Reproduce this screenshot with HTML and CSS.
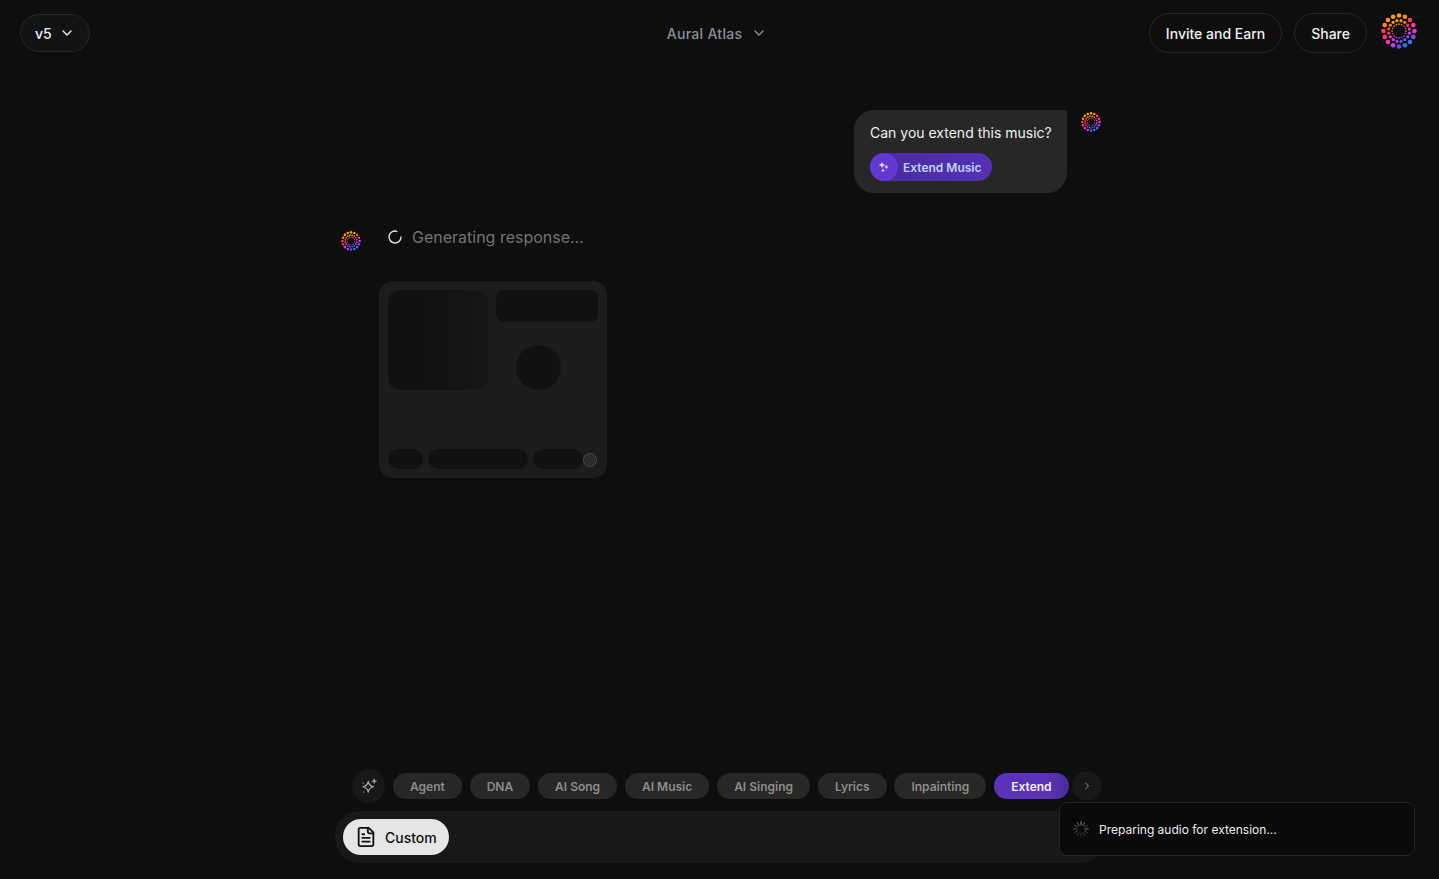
FILE: index.html
```html
<!DOCTYPE html>
<html lang="en">
<head>
    <meta charset="UTF-8">
    <meta name="viewport" content="width=device-width, initial-scale=1.0">
    <title>Aural Atlas</title>
    <link rel="stylesheet" href="styles.css">
</head>
<body>
    <!-- logo dots, reused at every size -->
    <svg class="defs" aria-hidden="true">
        <symbol id="logo" viewBox="-18 -18 36 36">
            <g>
                <circle cx="0" cy="-15.5" r="2.3" fill="#ffa00f"/>
                <circle cx="5.9" cy="-14.3" r="2.3" fill="#ff8a1c"/>
                <circle cx="11" cy="-11" r="2.3" fill="#f5405f"/>
                <circle cx="14.3" cy="-5.9" r="2.3" fill="#f83a9c"/>
                <circle cx="15.5" cy="0" r="2.3" fill="#d93fe6"/>
                <circle cx="14.3" cy="5.9" r="2.3" fill="#9a46ee"/>
                <circle cx="11" cy="11" r="2.3" fill="#3f72ee"/>
                <circle cx="5.9" cy="14.3" r="2.3" fill="#2f74f2"/>
                <circle cx="0" cy="15.5" r="2.3" fill="#6a48f0"/>
                <circle cx="-5.9" cy="14.3" r="2.3" fill="#c13ff0"/>
                <circle cx="-11" cy="11" r="2.3" fill="#e83cc0"/>
                <circle cx="-14.3" cy="5.9" r="2.3" fill="#f53a7c"/>
                <circle cx="-15.5" cy="0" r="2.3" fill="#fb3c60"/>
                <circle cx="-14.3" cy="-5.9" r="2.3" fill="#ff8a1c"/>
                <circle cx="-11" cy="-11" r="2.3" fill="#ff9612"/>
                <circle cx="-5.9" cy="-14.3" r="2.3" fill="#ffa00f"/>
            </g>
            <g>
                <circle cx="2.05" cy="-10.3" r="1.6" fill="#ff9a14"/>
                <circle cx="5.8" cy="-8.7" r="1.6" fill="#f9742e"/>
                <circle cx="8.7" cy="-5.8" r="1.6" fill="#ee4060"/>
                <circle cx="10.3" cy="-2.05" r="1.6" fill="#ee3c96"/>
                <circle cx="10.3" cy="2.05" r="1.6" fill="#d23edc"/>
                <circle cx="8.7" cy="5.8" r="1.6" fill="#a044ea"/>
                <circle cx="5.8" cy="8.7" r="1.6" fill="#5a5cec"/>
                <circle cx="2.05" cy="10.3" r="1.6" fill="#5a52ee"/>
                <circle cx="-2.05" cy="10.3" r="1.6" fill="#9446ee"/>
                <circle cx="-5.8" cy="8.7" r="1.6" fill="#d23edc"/>
                <circle cx="-8.7" cy="5.8" r="1.6" fill="#e83ca8"/>
                <circle cx="-10.3" cy="2.05" r="1.6" fill="#ee3c76"/>
                <circle cx="-10.3" cy="-2.05" r="1.6" fill="#f25040"/>
                <circle cx="-8.7" cy="-5.8" r="1.6" fill="#f97a24"/>
                <circle cx="-5.8" cy="-8.7" r="1.6" fill="#ff9214"/>
                <circle cx="-2.05" cy="-10.3" r="1.6" fill="#ff9a14"/>
            </g>
            <g>
                <circle cx="0" cy="-6.9" r=".95" fill="#e98a14"/>
                <circle cx="2.6" cy="-6.4" r=".95" fill="#e07020"/>
                <circle cx="4.9" cy="-4.9" r=".95" fill="#d84840"/>
                <circle cx="6.4" cy="-2.6" r=".95" fill="#d43c70"/>
                <circle cx="6.9" cy="0" r=".95" fill="#cc3ca8"/>
                <circle cx="6.4" cy="2.6" r=".95" fill="#b43cd0"/>
                <circle cx="4.9" cy="4.9" r=".95" fill="#8448dc"/>
                <circle cx="2.6" cy="6.4" r=".95" fill="#5a58dc"/>
                <circle cx="0" cy="6.9" r=".95" fill="#7048e0"/>
                <circle cx="-2.6" cy="6.4" r=".95" fill="#a83cd8"/>
                <circle cx="-4.9" cy="4.9" r=".95" fill="#cc3cb8"/>
                <circle cx="-6.4" cy="2.6" r=".95" fill="#d43c80"/>
                <circle cx="-6.9" cy="0" r=".95" fill="#d84450"/>
                <circle cx="-6.4" cy="-2.6" r=".95" fill="#e06424"/>
                <circle cx="-4.9" cy="-4.9" r=".95" fill="#e88018"/>
                <circle cx="-2.6" cy="-6.4" r=".95" fill="#e98a14"/>
            </g>
        </symbol>
    </svg>

    <header class="topbar">
        <div class="topbar-left">
            <button class="pill version">v5
                <svg class="chevron" viewBox="0 0 24 24"><path d="m6 9 6 6 6-6"/></svg>
            </button>
        </div>
        <div class="title">Aural Atlas
            <svg class="chevron" viewBox="0 0 24 24"><path d="m6 9 6 6 6-6"/></svg>
        </div>
        <div class="topbar-right">
            <button class="pill">Invite and Earn</button>
            <button class="pill">Share</button>
            <svg class="logo-big"><use href="#logo"/></svg>
        </div>
    </header>

    <main class="thread">
        <div class="messages">
            <div class="msg-user">
                <div class="bubble">
                    <p>Can you extend this music?</p>
                    <div class="tag">
                        <span class="tag-icon">
                            <svg viewBox="0 0 24 24"><path d="M8 1c.8 4.200 2.800 6.200 7 7-4.200.8-6.200 2.800-7 7-.8-4.200-2.800-6.200-7-7 4.200-.8 6.200-2.800 7-7Z"/><path d="M17 7c.6 3.200 1.800 4.400 5 5-3.200.6-4.400 1.800-5 5-.6-3.200-1.800-4.400-5-5 3.200-.6 4.400-1.800 5-5Z"/><path d="M10 15c.5 2.400 1.600 3.500 4 4-2.400.5-3.500 1.600-4 4-.5-2.400-1.600-3.500-4-4 2.400-.5 3.500-1.600 4-4Z"/></svg>
                        </span>
                        Extend Music
                    </div>
                </div>
                <svg class="logo-small"><use href="#logo"/></svg>
            </div>

            <div class="msg-bot">
                <svg class="logo-small"><use href="#logo"/></svg>
                <div class="bot-body">
                    <div class="status">
                        <svg class="spinner" viewBox="0 0 24 24"><path d="M21 12a9 9 0 1 1-6.200-8.560"/></svg>
                        Generating response…
                    </div>
                    <div class="skeleton">
                        <div class="skeleton-top">
                            <div class="sk-cover"></div>
                            <div class="sk-side">
                                <div class="sk-bar"></div>
                                <div class="sk-circle"></div>
                            </div>
                        </div>
                        <div class="skeleton-bottom">
                            <div class="sk-pill sk-a"></div>
                            <div class="sk-pill sk-b"></div>
                            <div class="sk-pill sk-c"></div>
                            <div class="sk-dot"></div>
                        </div>
                    </div>
                </div>
            </div>
        </div>

        <div class="composer">
            <div class="chips">
                <span class="round-btn sparkle">
                    <svg viewBox="0 0 24 24"><path d="M11 6c.9 4.400 2.600 6.100 7 7-4.400.9-6.100 2.600-7 7-.9-4.400-2.600-6.100-7-7 4.400-.9 6.100-2.600 7-7Z"/><path d="M19 3v5M16.500 5.500h5"/><path d="M4 8h.01M5 20h.01"/></svg>
                </span>
                <span class="chip">Agent</span>
                <span class="chip">DNA</span>
                <span class="chip">AI Song</span>
                <span class="chip">AI Music</span>
                <span class="chip">AI Singing</span>
                <span class="chip">Lyrics</span>
                <span class="chip">Inpainting</span>
                <span class="chip active">Extend</span>
                <span class="round-btn next">
                    <svg viewBox="0 0 24 24"><path d="m9 6 6 6-6 6"/></svg>
                </span>
            </div>
            <div class="input-bar">
                <button class="custom-btn">
                    <svg viewBox="0 0 24 24"><path d="M15 2H6a2 2 0 0 0-2 2v16a2 2 0 0 0 2 2h12a2 2 0 0 0 2-2V7Z"/><path d="M14 2v4a2 2 0 0 0 2 2h4"/><path d="M8 13h8M8 17h8M8 9h2"/></svg>
                    Custom
                </button>
            </div>
        </div>
    </main>

    <div class="toast">
        <svg class="toast-spin" viewBox="0 0 24 24">
            <path class="l1" d="M12 1v5"/>
            <path class="l2" d="M12 1v5" transform="rotate(30 12 12)"/>
            <path class="l3" d="M12 1v5" transform="rotate(60 12 12)"/>
            <path class="l1" d="M12 1v5" transform="rotate(90 12 12)"/>
            <path class="l3" d="M12 1v5" transform="rotate(120 12 12)"/>
            <path class="l4" d="M12 1v5" transform="rotate(150 12 12)"/>
            <path class="l4" d="M12 1v5" transform="rotate(180 12 12)"/>
            <path class="l4" d="M12 1v5" transform="rotate(210 12 12)"/>
            <path class="l3" d="M12 1v5" transform="rotate(240 12 12)"/>
            <path class="l2" d="M12 1v5" transform="rotate(270 12 12)"/>
            <path class="l3" d="M12 1v5" transform="rotate(300 12 12)"/>
            <path class="l2" d="M12 1v5" transform="rotate(330 12 12)"/>
        </svg>
        Preparing audio for extension...
    </div>
</body>
</html>
```

FILE: styles.css
```css
* {
    box-sizing: border-box;
}
html, body {
    height: 100%;
}
body {
    margin: 0;
    background-color: #0e0e0f;
    color: #f0f0f0;
    font-family: Inter, "Liberation Sans", sans-serif;
    font-size: 14px;
    overflow: hidden;
    display: flex;
    flex-direction: column;
}
button {
    font-family: inherit;
}
svg {
    display: block;
    flex-shrink: 0;
}
.defs {
    position: absolute;
    width: 0;
    height: 0;
}

/* top bar */
.topbar {
    display: grid;
    grid-template-columns: 1fr auto 1fr;
    align-items: center;
    height: 66px;
    padding: 0 22px 0 20px;
}
.topbar-right {
    display: flex;
    justify-content: flex-end;
    align-items: center;
    gap: 12px;
}
.pill {
    height: 40px;
    padding: 0 16px;
    display: inline-flex;
    align-items: center;
    background: transparent;
    border: 1px solid #27272a;
    border-radius: 20px;
    color: #f0f0f0;
    font-size: 14px;
    font-weight: 500;
}
.version {
    height: 38px;
    gap: 7px;
    padding: 0 14px;
    background-color: #121314;
}
.chevron {
    width: 16px;
    height: 16px;
    fill: none;
    stroke: currentColor;
    stroke-width: 2;
    stroke-linecap: round;
    stroke-linejoin: round;
}
.title {
    display: flex;
    align-items: center;
    gap: 9px;
    margin-right: 3px;
    color: #8b8f98;
    font-weight: 500;
    letter-spacing: .3px;
}
.logo-big {
    width: 36px;
    height: 36px;
    margin: -4px 0 0 2px;
}
.logo-small {
    width: 20px;
    height: 20px;
    margin-top: 2px;
}

/* chat column */
.thread {
    flex: 1;
    width: 769px;
    margin: 0 auto;
    display: flex;
    flex-direction: column;
    justify-content: space-between;
}
.msg-user {
    display: flex;
    justify-content: flex-end;
    align-items: flex-start;
    gap: 14px;
    margin-top: 44px;
    padding-right: 3px;
}
.bubble {
    width: 213px;
    height: 83px;
    padding: 14px 15px 0 16px;
    background-color: #272727;
    border-radius: 20px 0 20px 20px;
}
.bubble p {
    margin: 0 0 12px;
    font-size: 14px;
    line-height: 17px;
    white-space: nowrap;
}
.tag {
    display: inline-flex;
    align-items: center;
    gap: 5px;
    height: 28px;
    padding-right: 10px;
    background: linear-gradient(90deg, #4a2a9c, #5530b4);
    border-radius: 14px;
    color: #bcd4ff;
    font-size: 12px;
    font-weight: 600;
}
.tag-icon {
    width: 28px;
    height: 28px;
    display: flex;
    align-items: center;
    justify-content: center;
    background-color: #6238cf;
    border-radius: 50%;
}
.tag-icon svg {
    width: 12px;
    height: 12px;
    fill: #cfe0ff;
}
.msg-bot {
    display: flex;
    align-items: flex-start;
    gap: 18px;
    margin-top: 36px;
    padding-left: 6px;
}
.status {
    display: flex;
    align-items: center;
    gap: 9px;
    height: 16px;
    margin-left: 8px;
    color: #737373;
    font-size: 16px;
    white-space: nowrap;
}
.spinner {
    width: 16px;
    height: 16px;
    fill: none;
    stroke: #e8e8e8;
    stroke-width: 2;
    stroke-linecap: round;
}

/* loading card */
.skeleton {
    width: 228px;
    height: 197px;
    margin-top: 36px;
    padding: 9px;
    display: flex;
    flex-direction: column;
    justify-content: space-between;
    background-color: #1c1c1c;
    border-radius: 14px;
}
.skeleton-top {
    display: flex;
    gap: 8px;
}
.sk-cover {
    width: 100px;
    height: 100px;
    border-radius: 12px;
    background: linear-gradient(90deg, #111 40%, #141414 70%, #161616);
}
.sk-side {
    width: 102px;
}
.sk-bar {
    height: 32px;
    border-radius: 8px;
    background-color: #111;
}
.sk-circle {
    width: 45px;
    height: 45px;
    margin: 23px 0 0 20px;
    border-radius: 50%;
    background-color: #111;
}
.skeleton-bottom {
    display: flex;
    align-items: center;
    gap: 5px;
}
.sk-pill {
    height: 20px;
    border-radius: 10px;
    background-color: #111;
}
.sk-a {
    width: 35px;
}
.sk-b {
    width: 100px;
}
.sk-c {
    width: 50px;
}
.sk-dot {
    width: 14px;
    height: 14px;
    margin: 2px 0 0 -5px;
    border-radius: 50%;
    background-color: #2c2c2c;
    border: 1px dotted #666;
}

/* bottom composer */
.composer {
    padding-bottom: 16px;
}
.chips {
    display: flex;
    align-items: center;
    gap: 8px;
    padding-left: 17px;
}
.chip {
    height: 26px;
    padding: 0 17px;
    display: inline-flex;
    align-items: center;
    background-color: #272727;
    border-radius: 13px;
    color: #8c8c8c;
    font-size: 12px;
    font-weight: 600;
    white-space: nowrap;
    margin-right: -.1px;
}
.chip.active {
    background: linear-gradient(90deg, #5a33b8 70%, #4a2a9c);
    color: #f4f0ff;
}
.round-btn {
    display: flex;
    flex-shrink: 0;
    align-items: center;
    justify-content: center;
    border-radius: 50%;
    background-color: #18181a;
}
.round-btn svg {
    fill: none;
    stroke: #a8a8a8;
    stroke-width: 1.7;
    stroke-linecap: round;
    stroke-linejoin: round;
}
.sparkle {
    width: 33px;
    height: 34px;
}
.sparkle svg {
    width: 18px;
    height: 18px;
}
.next {
    width: 30px;
    height: 30px;
    margin-left: -4px;
}
.next svg {
    width: 12px;
    height: 12px;
}
.input-bar {
    height: 52px;
    margin-top: 8px;
    padding: 8px;
    background-color: #17181a;
    border-radius: 24px;
}
.custom-btn {
    height: 36px;
    padding: 0 12px;
    display: inline-flex;
    align-items: center;
    gap: 8px;
    background-color: #e5e5e5;
    border: none;
    border-radius: 18px;
    color: #111;
    font-size: 14px;
    font-weight: 500;
}
.custom-btn svg {
    width: 22px;
    height: 22px;
    fill: none;
    stroke: #111;
    stroke-width: 2;
    stroke-linecap: round;
    stroke-linejoin: round;
}

/* toast sits over the composer */
.toast {
    position: fixed;
    right: 24px;
    bottom: 23px;
    width: 356px;
    height: 54px;
    padding: 0 13px;
    display: flex;
    align-items: center;
    gap: 10px;
    background-color: #0a0a0a;
    border: 1px solid #242424;
    border-radius: 8px;
    color: #ededed;
    font-size: 12px;
}
.toast-spin {
    width: 16px;
    height: 16px;
    fill: none;
    stroke: #8a8a8a;
    stroke-width: 1.7;
    stroke-linecap: round;
}
.l1 { opacity: .85; }
.l2 { opacity: .6; }
.l3 { opacity: .4; }
.l4 { opacity: .3; }
```
